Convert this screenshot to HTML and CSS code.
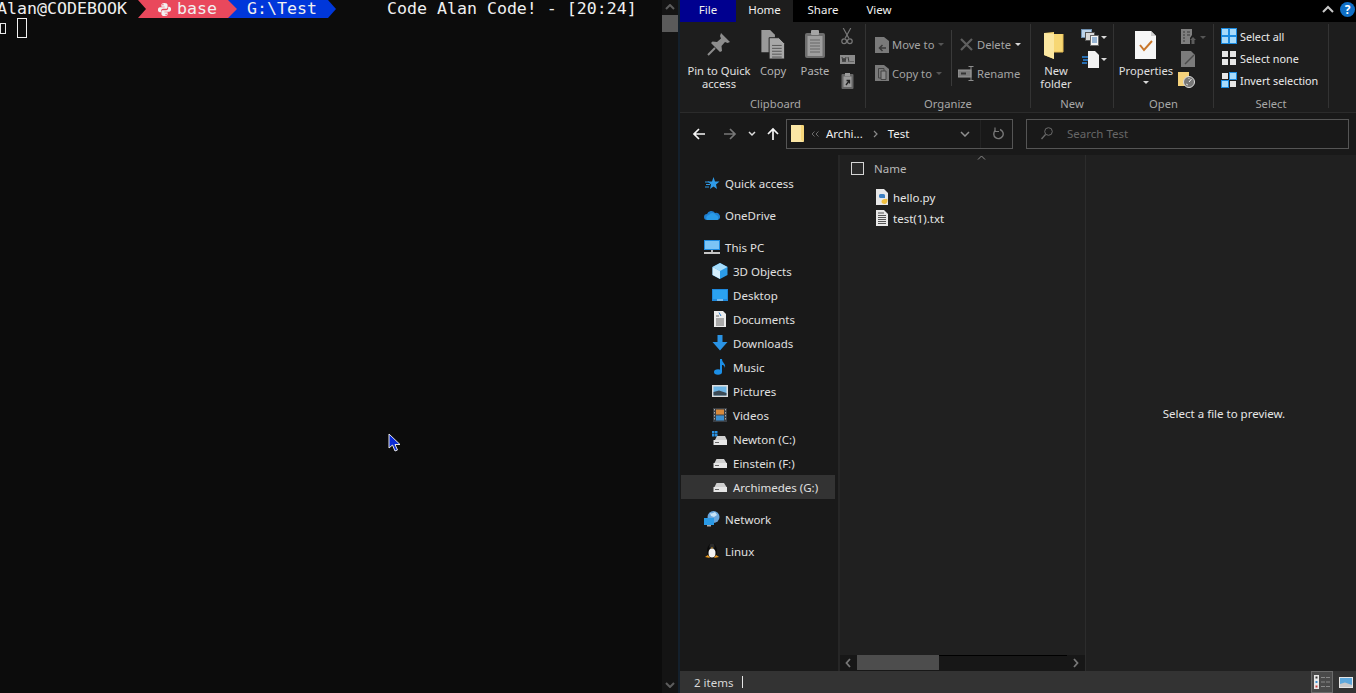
FILE: index.html
```html
<!DOCTYPE html>
<html lang="en">
<head>
<meta charset="utf-8">
<title>Terminal and Explorer</title>
<link rel="stylesheet" href="styles.css">
</head>
<body>
<section class="terminal">
  <div class="term-body">
    <div class="term-line">
      <span class="seg-user">Alan@CODEBOOK</span>
      <span class="seg-env"><svg class="py-glyph" viewBox="0 0 16 16"><path fill="#f2f2f2" d="M8 1C5 1 4.700 2.200 4.700 3.200V5H8.200V5.600H3.200C1.800 5.600 1 6.800 1 8.300S1.800 11 3 11H4.400V9.300C4.400 8 5.400 7.200 6.400 7.200H9.700C10.600 7.200 11.300 6.500 11.300 5.600V3.200C11.300 2 10.200 1 8 1ZM6.300 2.100A.7.7 0 1 1 6.300 3.500.7.7 0 0 1 6.300 2.100Z"/><path fill="#f2f2f2" d="M8 15C11 15 11.300 13.800 11.300 12.800V11H7.800V10.400H12.800C14.200 10.400 15 9.200 15 7.700S14.200 5 13 5H11.900V6.700C11.900 8 10.900 8.800 9.900 8.800H6.300C5.400 8.800 4.700 9.500 4.700 10.400V12.800C4.700 14 5.800 15 8 15ZM9.700 13.900A.7.7 0 1 1 9.700 12.500.7.7 0 0 1 9.700 13.900Z"/></svg>base</span>
      <span class="seg-path">G:\Test</span>
      <span class="seg-msg">Code Alan Code! - [20:24]</span>
    </div>
    <div class="term-line">
      <span class="term-box"></span>
      <span class="term-cursor"></span>
    </div>
  </div>
  <div class="term-scroll">
    <svg class="ts-arrow" viewBox="0 0 10 6"><path d="M1 5L5 1L9 5" fill="none" stroke="#5d5d5d" stroke-width="2"/></svg>
    <div class="ts-thumb"></div>
    <svg class="ts-arrow ts-down" viewBox="0 0 10 6"><path d="M1 1L5 5L9 1" fill="none" stroke="#5d5d5d" stroke-width="2"/></svg>
  </div>
  <svg class="mouse" viewBox="0 0 13 19"><path d="M1 1V15L4.500 12L7 18L9.500 17L7 11.500H12Z" fill="#0a2ad8" stroke="#e8e8e8" stroke-width="1"/></svg>
</section>

<section class="explorer">
  <div class="tabs">
    <span class="tab tab-file">File</span>
    <span class="tab tab-home">Home</span>
    <span class="tab tab-share">Share</span>
    <span class="tab tab-view">View</span>
    <span class="tabs-fill"></span>
    <svg class="collapse" viewBox="0 0 12 8"><path d="M1 7L6 2L11 7" fill="none" stroke="#c8c8c8" stroke-width="2"/></svg>
    <span class="help">?</span>
  </div>

  <div class="ribbon">
    <div class="group g-clip">
      <div class="group-body">
        <div class="big b-pin">
          <div class="big-icon"><svg width="26" height="26" viewBox="0 0 26 26"><path d="M15 2L24 11L21.500 12L19 11L15.500 15L16 20L14 21L5 12L6.500 10.500L11 11L15 7.500L14 5Z" fill="#8d8d8d"/><path d="M9 17L2 24" stroke="#8d8d8d" stroke-width="2"/></svg></div>
          <span class="big-label">Pin to Quick<br>access</span>
        </div>
        <div class="big b-copy">
          <div class="big-icon"><svg width="26" height="30" viewBox="0 0 26 31"><path d="M1 1H10L15 6V24H1Z" fill="#9a9a9a"/><path d="M9 9H19L25 15V31H9Z" fill="#a8a8a8" stroke="#222" stroke-width="1"/><path d="M12 17H22M12 20H22M12 23H22M12 26H22M12 29H22" stroke="#555" stroke-width="1"/></svg></div>
          <span class="big-label">Copy</span>
        </div>
        <div class="big b-paste">
          <div class="big-icon"><svg width="22" height="30" viewBox="0 0 22 30"><rect x="1" y="4" width="20" height="25" rx="2" fill="#6e6e6e"/><rect x="3.500" y="7" width="15" height="20" fill="#9e9e9e"/><rect x="7" y="1" width="8" height="5" rx="1" fill="#a5a5a5"/><path d="M6 11H16M6 14H16M6 17H16M6 20H16M6 23H16" stroke="#666" stroke-width="1"/></svg></div>
          <span class="big-label">Paste</span>
        </div>
        <div class="mini-col">
          <svg class="mini" width="12" height="17" viewBox="0 0 12 18"><path d="M2 0L8 11M10 0L4 11" stroke="#777" stroke-width="1.200" fill="none"/><circle cx="3" cy="14" r="2.500" fill="none" stroke="#777" stroke-width="1.300"/><circle cx="9" cy="14" r="2.500" fill="none" stroke="#777" stroke-width="1.300"/></svg>
          <svg class="mini" width="15" height="9" viewBox="0 0 15 9"><rect width="15" height="9" fill="#8b8b8b"/><path d="M2 2L3 7L4 3L5 7L6 2M8 2L9 7M11 7V6M13 7V6" stroke="#3a3a3a" fill="none"/></svg>
          <svg class="mini" width="13" height="16" viewBox="0 0 13 16"><rect x="0.500" y="1" width="12" height="15" rx="1" fill="#666"/><rect x="2.500" y="3.500" width="8" height="10.500" fill="#9a9a9a"/><rect x="4" y="0" width="5" height="3" fill="#999"/><path d="M5 12L8 8M5.500 7.500H8.500V10.500" stroke="#222" stroke-width="1.300" fill="none"/></svg>
        </div>
      </div>
      <span class="group-label">Clipboard</span>
    </div>

    <div class="group g-org">
      <div class="group-body org-body">
        <div class="org-col col-move">
          <div class="small"><svg width="14" height="16" viewBox="0 0 14 16"><path d="M0 0H9L14 4V16H0Z" fill="#7a7a7a"/><path d="M11 11H5M7.500 8L4.500 11L7.500 14" stroke="#3a3a3a" stroke-width="1.500" fill="none"/></svg><span class="small-text off">Move to</span><i class="caret c-dim"></i></div>
          <div class="small"><svg width="14" height="16" viewBox="0 0 14 16"><path d="M0 0H9L14 4V16H0Z" fill="#7a7a7a"/><path d="M3.500 3.500H9V13H3.500Z" fill="none" stroke="#444"/><path d="M6 6H11V14.500H6Z" fill="#8a8a8a" stroke="#444"/></svg><span class="small-text off">Copy to</span><i class="caret c-dim"></i></div>
        </div>
        <div class="org-col col-del">
          <div class="small"><svg class="del-ico" width="13" height="13" viewBox="0 0 13 13"><path d="M1 1L12 12M12 1L1 12" stroke="#5f5f5f" stroke-width="2.200"/></svg><span class="small-text off">Delete</span><i class="caret"></i></div>
          <div class="small"><svg class="ren-ico" width="18" height="15" viewBox="0 0 18 15"><rect y="4" width="13" height="7" fill="#7c7c7c" stroke="#999"/><path d="M3 7.500H8" stroke="#333" stroke-width="2"/><path d="M13 0.500V14.500M10.500 0.500H15.500M10.500 14.500H15.500" stroke="#8e8e8e" stroke-width="1"/></svg><span class="small-text off">Rename</span></div>
        </div>
      </div>
      <span class="group-label">Organize</span>
    </div>

    <div class="group g-new">
      <div class="group-body">
        <div class="big b-newf">
          <div class="big-icon"><svg width="20" height="28" viewBox="0 0 20 28"><path d="M0 1L10 0V2H19V20H10V27L0 23Z" fill="#f7d774"/><path d="M10 2L0 1V23L10 27Z" fill="#fbe7a1"/><path d="M10 20H19V2" fill="none" stroke="#e7bd55"/></svg></div>
          <span class="big-label">New<br>folder</span>
        </div>
        <div class="mini-col new-minis">
          <div class="mini-row"><svg width="19" height="17" viewBox="0 0 19 17"><rect x="0.500" y="0.500" width="10" height="8" fill="#bcd3ea" stroke="#6e8faf"/><rect x="4.500" y="3.500" width="9" height="8" fill="#d9d9d9" stroke="#555"/><rect x="9.500" y="6.500" width="8" height="10" fill="#f4f4f4" stroke="#666"/><path d="M11 9H16M11 11H16M11 13H16" stroke="#3b77b5"/></svg><i class="caret"></i></div>
          <div class="mini-row"><svg width="19" height="17" viewBox="0 0 19 17"><path d="M7 0H14L18 4V17H7Z" fill="#f2f2f2"/><path d="M1 6H7M2 9H7M1 12H6" stroke="#2a86e0" stroke-width="1.300"/></svg><i class="caret"></i></div>
        </div>
      </div>
      <span class="group-label">New</span>
    </div>

    <div class="group g-open">
      <div class="group-body">
        <div class="big b-prop">
          <div class="big-icon"><svg width="22" height="28" viewBox="0 0 22 28"><path d="M0 0H16L21 5V28H0Z" fill="#f6f6f6"/><path d="M16 0V5H21" fill="#cfcfcf"/><path d="M5 14L9 19L17 10" stroke="#c8762a" stroke-width="2" fill="none"/></svg></div>
          <span class="big-label">Properties</span>
          <i class="caret prop-caret"></i>
        </div>
        <div class="mini-col open-minis">
          <div class="mini-row"><svg width="16" height="16" viewBox="0 0 16 16"><path d="M0 0H11V6L9 9V15H0Z" fill="#7f7f7f"/><path d="M2 3H4M6 3H9M2 6H4M6 6H9M2 9H4M2 12H4" stroke="#3a3a3a"/><path d="M12 8L15 11H13.500V15H10.500V11H9Z" fill="#5c5c5c"/></svg><i class="caret c-dim"></i></div>
          <div class="mini-row"><svg width="15" height="16" viewBox="0 0 15 16"><path d="M0 0H10L14 4V16H0Z" fill="#7b7b7b"/><path d="M4 13L13 4" stroke="#4a4a4a" stroke-width="1.500"/></svg></div>
          <div class="mini-row hist"><svg width="17" height="16" viewBox="0 0 17 16"><rect width="11" height="14" fill="#f4d27b"/><circle cx="11" cy="10" r="5.500" fill="#777" stroke="#ddd"/><path d="M11 10L13.500 7" stroke="#eee"/><path d="M8 12L10 13M11 6V7" stroke="#ddd"/></svg></div>
        </div>
      </div>
      <span class="group-label">Open</span>
    </div>

    <div class="group g-sel">
      <div class="group-body sel-body">
        <div class="sel-row"><svg width="16" height="16" viewBox="0 0 16 16"><rect width="16" height="16" fill="#1c8be0"/><path d="M1 1H7V7H1ZM9 1H15V7H9ZM1 9H7V15H1ZM9 9H15V15H9Z" fill="#a8dbfb"/></svg><span class="small-text">Select all</span></div>
        <div class="sel-row"><svg width="16" height="16" viewBox="0 0 16 16"><path d="M1 1H7V7H1ZM9 1H15V7H9ZM1 9H7V15H1ZM9 9H15V15H9Z" fill="#e6e6e6"/></svg><span class="small-text">Select none</span></div>
        <div class="sel-row"><svg width="16" height="16" viewBox="0 0 16 16"><path d="M8 0H16V8H8ZM0 8H8V16H0Z" fill="#1c8be0"/><path d="M9 1H15V7H9ZM1 9H7V15H1Z" fill="#a8dbfb"/><path d="M1 1H7V7H1ZM9 9H15V15H9Z" fill="#e6e6e6"/></svg><span class="small-text">Invert selection</span></div>
      </div>
      <span class="group-label">Select</span>
    </div>
    <div class="ribbon-fill"></div>
  </div>

  <div class="address-row">
    <svg class="nav-btn nb-back" width="14" height="14" viewBox="0 0 14 14"><path d="M13 7H2M7 2L2 7L7 12" fill="none" stroke="#f5f5f5" stroke-width="1.700"/></svg>
    <svg class="nav-btn nb-fwd" width="14" height="14" viewBox="0 0 14 14"><path d="M1 7H12M7 2L12 7L7 12" fill="none" stroke="#777" stroke-width="1.700"/></svg>
    <svg class="nav-btn nb-hist" width="8" height="6" viewBox="0 0 8 6"><path d="M1 1L4 4L7 1" fill="none" stroke="#ddd" stroke-width="1.500"/></svg>
    <svg class="nav-btn nb-up" width="12" height="14" viewBox="0 0 12 14"><path d="M6 13V2M1 7L6 2L11 7" fill="none" stroke="#f5f5f5" stroke-width="1.700"/></svg>
    <div class="addr">
      <svg class="addr-folder" width="13" height="17" viewBox="0 0 13 17"><rect width="13" height="17" rx="1" fill="#f6d67a"/><path d="M0 0H10V15L13 17H0Z" fill="#fbe6a4"/></svg>
      <svg class="addr-lt" width="8" height="6" viewBox="0 0 8 6"><path d="M3.500 0.500L1 3L3.500 5.500M7.500 0.500L5 3L7.500 5.500" fill="none" stroke="#6a6a6a"/></svg>
      <span class="crumb">Archi...</span>
      <svg class="crumb-sep" width="5" height="8" viewBox="0 0 5 8"><path d="M1 1L4 4L1 7" fill="none" stroke="#8a8a8a" stroke-width="1.200"/></svg>
      <span class="crumb crumb-test">Test</span>
      <span class="addr-fill"></span>
      <svg class="addr-drop" width="10" height="6" viewBox="0 0 10 6"><path d="M1 1L5 5L9 1" fill="none" stroke="#8f8f8f" stroke-width="1.500"/></svg>
      <span class="addr-refresh"><svg width="12" height="13" viewBox="0 0 12 13"><path d="M3.300 3.500A4.700 4.700 0 1 0 8 2.500" fill="none" stroke="#777" stroke-width="1.400"/><path d="M3 0.500V4.500H7" fill="none" stroke="#777" stroke-width="1.200"/></svg></span>
    </div>
    <div class="search">
      <svg width="12" height="13" viewBox="0 0 12 13"><circle cx="7.500" cy="4.500" r="3.800" fill="none" stroke="#6b6b6b"/><path d="M4.500 7.500L0.500 12" stroke="#6b6b6b" stroke-width="1.300"/></svg>
      <span class="search-text">Search Test</span>
    </div>
  </div>

  <div class="panes">
    <nav class="tree">
      <div class="node top"><svg class="ni" viewBox="0 0 16 16"><path d="M9.500 2L11 6.500H15.500L12 9.500L13 14L9.500 11.500L6 14L7 9.500L3.500 6.500H8Z" fill="#2f9be8"/><path d="M1 7H5M2 9.500H6M1 12H5" stroke="#2f9be8"/></svg><span>Quick access</span></div>
      <div class="node top"><svg class="ni" viewBox="0 0 16 16"><path d="M3 13A3 3 0 0 1 3 7 4.500 4.500 0 0 1 11 6 3.500 3.500 0 0 1 13.500 13Z" fill="#1f7fd0"/><path d="M3 13A3 3 0 0 1 5 8 4 4 0 0 1 12 8 3 3 0 0 1 13.500 13Z" fill="#2a9be8"/></svg><span>OneDrive</span></div>
      <div class="node top"><svg class="ni" viewBox="0 0 16 16"><rect y="1" width="16" height="10" fill="#1e8be0"/><rect x="1" y="2" width="14" height="8" fill="#7cc4f5"/><path d="M7 11H9V13H7Z" fill="#bbb"/><rect y="13" width="16" height="2" fill="#c6c6c6"/></svg><span>This PC</span></div>
      <div class="node sub"><svg class="ni" viewBox="0 0 16 16"><path d="M8 0L15.500 4V12L8 16L.5 12V4Z" fill="#2c9ce8"/><path d="M8 0L15.500 4L8 8L.5 4Z" fill="#a6dcfa"/><path d="M.5 4L8 8V16L.5 12Z" fill="#d5effd"/></svg><span>3D Objects</span></div>
      <div class="node sub"><svg class="ni" viewBox="0 0 16 16"><rect y="2" width="16" height="12" fill="#1e88dc"/><rect x="1" y="3" width="14" height="9" fill="#2ba1ef"/><rect x="5" y="12.500" width="6" height="1" fill="#d0ecfb"/></svg><span>Desktop</span></div>
      <div class="node sub"><svg class="ni" viewBox="0 0 16 16"><path d="M2 0H11L14 3V16H2Z" fill="#ececec"/><path d="M4 5H7M4 8H12M4 10H12M4 12H12M4 14H12" stroke="#666"/><path d="M7 1.500L9 5" stroke="#2a7fd0"/></svg><span>Documents</span></div>
      <div class="node sub"><svg class="ni" viewBox="0 0 16 16"><path d="M5.500 0H10.500V7H15.500L8 15.500L.5 7H5.500Z" fill="#2a93e4"/></svg><span>Downloads</span></div>
      <div class="node sub"><svg class="ni" viewBox="0 0 16 16"><ellipse cx="6" cy="13" rx="4" ry="2.800" fill="#1c8fe6"/><path d="M8 13V0H10C10 4 14 4 13 9C12.500 6.500 11 6 10 6V13Z" fill="#1c8fe6"/></svg><span>Music</span></div>
      <div class="node sub"><svg class="ni" viewBox="0 0 16 16"><rect y="2" width="16" height="12" fill="#dcdcdc"/><rect x="1.500" y="3.500" width="13" height="9" fill="#6db5e6"/><path d="M1.500 9L7 7.500L14.500 10V12.500H1.500Z" fill="#3c4a55"/></svg><span>Pictures</span></div>
      <div class="node sub"><svg class="ni" viewBox="0 0 16 16"><rect x="1" y="1" width="14" height="14" fill="#3a3f45"/><rect x="4" y="2.500" width="8" height="5" fill="#d88a3c"/><rect x="4" y="8.500" width="8" height="5" fill="#3c8fd0"/><path d="M2.500 2V14M13.500 2V14" stroke="#aaa" stroke-dasharray="1.500 1.500"/></svg><span>Videos</span></div>
      <div class="node sub"><svg class="ni" viewBox="0 0 16 16"><path d="M0 0H2.500V2.500H0ZM3 0H5.500V2.500H3ZM0 3H2.500V5.500H0ZM3 3H5.500V5.500H3Z" fill="#2a93e4"/><path d="M3 9L5 5H13L15 9Z" fill="#cfcfcf"/><rect x="1.500" y="9" width="13.500" height="5" fill="#e6e6e6"/><rect x="3" y="11" width="4" height="1" fill="#666"/></svg><span>Newton (C:)</span></div>
      <div class="node sub"><svg class="ni" viewBox="0 0 16 16"><path d="M2.500 8L4.500 4H12L14.500 8Z" fill="#cfcfcf"/><rect x="1.500" y="8" width="13.500" height="5" fill="#e6e6e6"/><rect x="3" y="10" width="4" height="1" fill="#666"/></svg><span>Einstein (F:)</span></div>
      <div class="node sub on"><svg class="ni" viewBox="0 0 16 16"><path d="M2.500 8L4.500 4H12L14.500 8Z" fill="#cfcfcf"/><rect x="1.500" y="8" width="13.500" height="5" fill="#e6e6e6"/><rect x="3" y="10" width="4" height="1" fill="#666"/></svg><span>Archimedes (G:)</span></div>
      <div class="node top"><svg class="ni" viewBox="0 0 16 16"><circle cx="9.500" cy="6" r="6" fill="#6aa6dc"/><path d="M6 2C8 3 9 2 11 1L13 4L10 6L7 5Z" fill="#c8e3f7"/><rect y="7" width="10" height="7" fill="#2a9ae6"/><rect x="3" y="14" width="4" height="1.500" fill="#aaa"/></svg><span>Network</span></div>
      <div class="node top"><svg class="ni" viewBox="0 0 16 16"><ellipse cx="8" cy="8" rx="5" ry="7.500" fill="#0a0a0a"/><ellipse cx="8" cy="3.500" rx="2.500" ry="3" fill="#2a2a2a"/><ellipse cx="8" cy="10" rx="3.500" ry="4.500" fill="#f2f2f2"/><path d="M7 4.500H9L8 6Z" fill="#e8a020"/><path d="M1 14L4 12L6 15ZM15 14L12 12L10 15Z" fill="#e8981e"/></svg><span>Linux</span></div>
    </nav>

    <div class="files">
      <div class="files-scroll">
        <svg class="sort" width="9" height="5" viewBox="0 0 9 5"><path d="M1 4.500L4.500 1L8 4.500" fill="none" stroke="#8a8a8a"/></svg>
        <div class="col-head"><span class="check"></span><span class="col-name">Name</span></div>
        <div class="file"><svg class="fi" viewBox="0 0 14 16"><path d="M1 0H9L13 4V16H1Z" fill="#e8e8e8"/><path d="M4 7C4 5 5 5 7 5S10 5 10 7V9H6C5 9 4 9 4 7Z" fill="#3d7fc0"/><path d="M12.500 11C12.500 13 11.500 15 9.500 15S6.500 14 6.500 12.500 8 10 10 10 12.500 9 12.500 11Z" fill="#f0c040"/></svg><span>hello.py</span></div>
        <div class="file"><svg class="fi" viewBox="0 0 14 16"><path d="M1 0H9L13 4V16H1Z" fill="#e8e8e8"/><path d="M3 3H9M3 5.500H11M3 7.500H11M3 9.500H11M3 11.500H11M3 13.500H11" stroke="#555"/></svg><span>test(1).txt</span></div>
      </div>
      <div class="hscroll">
        <svg class="hs-arrow" width="6" height="10" viewBox="0 0 6 10"><path d="M5 1L1.500 5L5 9" fill="none" stroke="#777" stroke-width="1.800"/></svg>
        <div class="hs-track"><div class="hs-thumb"></div><div class="hs-rest"></div></div>
        <svg class="hs-arrow" width="6" height="10" viewBox="0 0 6 10"><path d="M1 1L4.500 5L1 9" fill="none" stroke="#777" stroke-width="1.800"/></svg>
      </div>
    </div>

    <aside class="preview">Select a file to preview.</aside>
  </div>

  <div class="status">
    <span class="count">2 items</span>
    <span class="status-bar-sep"></span>
    <span class="status-fill"></span>
    <span class="view-btn on"><svg width="16" height="14" viewBox="0 0 16 14"><rect x="0" y="0" width="5" height="14" fill="#e8e8e8"/><rect x="1.500" y="1.500" width="2" height="2" fill="#333"/><rect x="1.500" y="6" width="2" height="2" fill="#3c8fd0"/><rect x="1.500" y="10.500" width="2" height="2" fill="#c83c3c"/><path d="M7 2.500H11M12 2.500H16M7 7H11M12 7H16M7 11.500H11M12 11.500H16" stroke="#888" stroke-width="1"/></svg></span>
    <span class="view-btn"><svg width="14" height="11" viewBox="0 0 14 11"><rect width="14" height="11" fill="#e6e6e6"/><rect x="1" y="1" width="12" height="9" fill="#5ea8dc"/><path d="M1 7L6 5.500L13 8V10H1Z" fill="#c9c9c9"/></svg></span>
  </div>
</section>
</body>
</html>
```
FILE: styles.css
```css
* { box-sizing: border-box; }
html, body { margin: 0; height: 100%; overflow: hidden; }
body { display: flex; width: 1356px; height: 693px; background: #0c0c0c; font-family: "Noto Sans", sans-serif; font-size: 11.5px; color: #e6e6e6; }
svg { display: block; flex: none; }

/* terminal */
.terminal { position: relative; display: flex; width: 680px; height: 693px; background: #0c0c0c; border-right: 2px solid #14202c; overflow: hidden; }
.term-body { width: 662px; font-family: "DejaVu Sans Mono", monospace; font-size: 16.6px; color: #f0f0f0; }
.term-line { display: flex; align-items: center; height: 18px; line-height: 18px; white-space: pre; }
.seg-user { width: 141px; margin-left: -3px; flex: none; }
.seg-env { position: relative; z-index: 1; display: flex; align-items: center; width: 99px; height: 18px; padding-left: 19px; background: #e9485c; clip-path: polygon(0 0, 90px 0, 99px 50%, 90px 100%, 0 100%, 8px 50%); }
.py-glyph { width: 15px; height: 15px; margin-right: 5px; }
.seg-path { width: 108px; height: 18px; margin-left: -9px; padding-left: 19px; background: #0037da; clip-path: polygon(0 0, 100px 0, 108px 50%, 100px 100%, 0 100%); }
.seg-msg { margin-left: 51px; }
.term-line + .term-line { height: 20px; }
.term-box { width: 6px; height: 11px; border: 1px solid #e8e8e8; }
.term-cursor { width: 10px; height: 20px; margin-left: 11px; border: 1px solid #f2f2f2; }
.term-scroll { display: flex; flex-direction: column; align-items: center; width: 16px; height: 693px; background: #141414; }
.ts-arrow { width: 10px; height: 6px; margin: 4px 0 5px; }
.ts-thumb { width: 16px; height: 17px; background: #5a5a5a; }
.ts-down { margin-top: auto; margin-bottom: 5px; }
.mouse { position: absolute; left: 388px; top: 433px; width: 13px; height: 19px; }

/* explorer */
.explorer { display: flex; flex-direction: column; width: 676px; height: 693px; background: #191919; }
.tabs { display: flex; align-items: center; height: 22px; padding-bottom: 4px; background: #000; flex: none; }
.tab { display: flex; align-items: center; justify-content: center; height: 22px; margin-bottom: -4px; padding-bottom: 4px; color: #f0f0f0; }
.tab-file { width: 56px; background: #00008f; }
.tab-home { width: 57px; background: #1d1d1d; }
.tab-share { width: 60px; }
.tab-view { width: 52px; }
.tabs-fill { flex: 1; }
.collapse { width: 12px; height: 8px; margin-right: 6px; }
.help { display: flex; align-items: center; justify-content: center; width: 15px; height: 15px; margin-right: 1px; border-radius: 50%; background: #0f6fc6; color: #fff; font-weight: 700; font-size: 12px; }

.ribbon { display: flex; height: 91px; padding-top: 2px; background: #1d1d1d; border-bottom: 1px solid #2b2b2b; font-size: 11.2px; flex: none; }
.group { display: flex; flex-direction: column; height: 84px; border-right: 1px solid #333; flex: none; }
.group-body { display: flex; flex: none; height: 71px; }
.group-label { text-align: center; line-height: 14px; color: #a8a8a8; margin-top: 2px; }
.g-clip { width: 186px; padding-left: 6px; }
.g-org { width: 165px; }
.g-new { width: 83px; }
.g-open { width: 100px; }
.g-sel { width: 115px; }
.ribbon-fill { flex: 1; }

.big { display: flex; flex-direction: column; align-items: center; flex: none; }
.big-icon { display: flex; align-items: center; justify-content: center; height: 40px; }
.big-label { text-align: center; line-height: 13px; white-space: nowrap; color: #e0e0e0; }
.b-pin { width: 66px; }
.b-copy { width: 42px; }
.b-copy .big-label, .b-paste .big-label { color: #b4b4b4; }
.b-paste { width: 42px; }
.mini-col { display: flex; flex-direction: column; align-items: center; justify-content: space-between; width: 22px; height: 65px; padding-top: 4px; }
.mini { flex: none; }

.org-body { padding-top: 6px; }
.org-col { display: flex; flex-direction: column; flex: none; }
.col-move { width: 86px; height: 56px; padding-left: 9px; border-right: 1px solid #3a3a3a; }
.col-del { padding-left: 6px; }
.small { display: flex; align-items: center; height: 29px; }
.small:last-child { height: 27px; padding-top: 1px; }
.small-text { margin-left: 3px; white-space: nowrap; }
.off { color: #a4a4a4; }
.caret { display: block; width: 0; height: 0; margin-left: 4px; border-left: 3px solid transparent; border-right: 3px solid transparent; border-top: 3px solid #d8d8d8; }
.c-dim { border-top-color: #555; }
.del-ico { margin-left: 2px; margin-right: 1px; }
.ren-ico { margin-right: -2px; }

.b-newf { width: 50px; }
.b-newf .big-icon { padding: 3px 5px 0 0; }
.new-minis { width: 27px; height: 44px; padding-top: 5px; align-items: flex-start; }
.mini-row { display: flex; align-items: center; }
.mini-row .caret { margin-left: 1px; }
.b-prop { width: 64px; }
.b-prop .big-icon { padding-top: 2px; }
.prop-caret { margin: 4px 0 0; }
.open-minis { width: 30px; height: 64px; margin-left: 3px; padding-top: 5px; align-items: flex-start; }
.mini-row.hist { margin-left: -3px; }
.open-minis .caret { margin-left: 3px; }
.sel-body { flex-direction: column; padding: 1px 0 0 7px; }
.sel-row { display: flex; align-items: center; height: 22px; font-size: 10.8px; }
.sel-row .small-text { margin-left: 3px; color: #ececec; }

.address-row { display: flex; align-items: center; height: 42px; padding-bottom: 1px; background: #191919; flex: none; }
.nb-back { margin-left: 12px; }
.nb-fwd { margin-left: 17px; }
.nb-hist { margin-left: 11px; }
.nb-up { margin-left: 11px; }
.addr { display: flex; align-items: center; width: 227px; height: 30px; margin-left: 7px; border: 1px solid #555; }
.addr-folder { margin-left: 4px; }
.addr-lt { margin-left: 7px; }
.crumb { margin-left: 7px; color: #f0f0f0; }
.crumb-sep { margin-left: 10px; }
.crumb-test { margin-left: 10px; }
.addr-fill { flex: 1; }
.addr-drop { margin-right: 10px; }
.addr-refresh { display: flex; align-items: center; justify-content: center; width: 32px; height: 28px; padding-left: 3px; border-left: 1px solid #232323; }
.search { display: flex; align-items: center; width: 323px; height: 30px; margin-left: 13px; padding-left: 14px; border: 1px solid #555; }
.search-text { margin-left: 14px; color: #676767; }

.panes { display: flex; flex: 1; min-height: 0; }
.tree { width: 158px; padding: 16px 0 0 1px; background: #191919; flex: none; }
.node { display: flex; align-items: center; height: 24px; width: 154px; white-space: nowrap; color: #e0e0e0; }
.node.top { padding-left: 23px; margin-bottom: 8px; }
.node.sub { padding-left: 31px; }
.node .ni { width: 16px; height: 16px; margin-right: 5px; }
.node.top:nth-child(3) { margin-bottom: 0; }
.node.on { background: #333; margin-bottom: 8px; }
.files { display: flex; flex-direction: column; width: 248px; background: #202020; border-left: 2px solid #262626; border-right: 1px solid #2c2c2c; flex: none; }
.files-scroll { position: relative; flex: 1; padding-top: 1px; }
.sort { position: absolute; left: 137px; top: 0; }
.col-head { display: flex; align-items: center; height: 24px; padding-left: 11px; }
.check { width: 13px; height: 13px; border: 1px solid #d5d5d5; background: #2a2a2a; }
.col-name { margin-left: 10px; color: #b8b8b8; }
.file { display: flex; align-items: center; height: 20px; padding-left: 35px; color: #e6e6e6; }
.col-head + .file { margin-top: 7px; }
.file + .file { margin-top: 1px; }
.fi { width: 14px; height: 16px; margin-right: 4px; }
.hscroll { display: flex; align-items: center; justify-content: space-between; height: 16px; padding: 0 6px 0 5px; background: #171717; flex: none; }
.hs-track { display: flex; width: 214px; height: 16px; margin-right: 5px; }
.hs-thumb { width: 82px; height: 15px; background: #4d4d4d; margin-left: 4px; }
.hs-rest { flex: 1; height: 1px; background: #000; }
.preview { display: flex; flex: 1; align-items: center; justify-content: center; padding-left: 6px; background: #202020; color: #e6e6e6; }

.status { display: flex; align-items: center; height: 22px; padding-left: 14px; background: #333; flex: none; }
.count { color: #d8d8d8; }
.status-bar-sep { width: 1px; height: 12px; margin-left: 9px; background: #e6e6e6; }
.status-fill { flex: 1; }
.view-btn { display: flex; align-items: center; justify-content: center; width: 22px; height: 22px; margin-right: 3px; }
.view-btn.on { background: #4a4a4a; border: 1px solid #6a6a6a; }
.view-btn:last-child { margin-right: 0; width: 20px; }
```
